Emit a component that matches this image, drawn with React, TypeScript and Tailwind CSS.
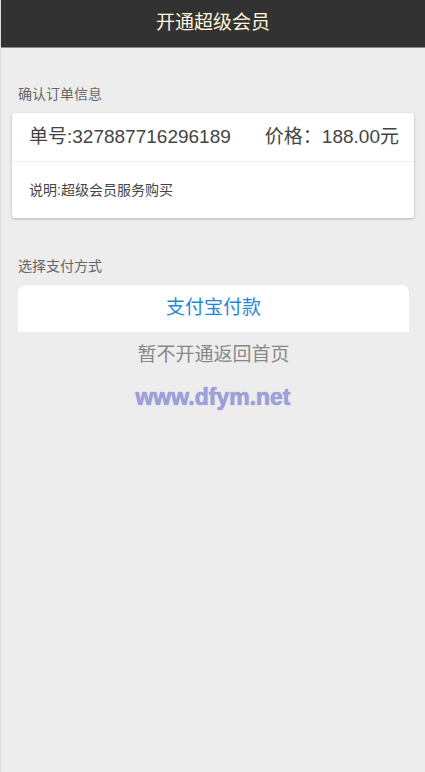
import React from 'react';

// ============================================================
// Pay page (开通超级会员)
// ============================================================

const font = 'font-["Liberation_Sans","Noto_Sans_CJK_SC",sans-serif]';

export default function App() {
  const order = {
    no: '327887716296189',
    price: '188.00',
    desc: '超级会员服务购买',
  };

  return (
    <div className={`min-h-[772px] w-[425px] border-l border-[#dcdcdc] bg-[#ededed] ${font}`}>
      {/* Header */}
      <header className="flex h-[48px] items-center justify-center border-b border-[#8a8a8a] bg-[#323232]">
        <h1 className="-mt-[3px] text-[19px] leading-none text-[#fff6dc]">开通超级会员</h1>
      </header>

      {/* Order info */}
      <div className="pl-[17px] pr-[11px] pt-[38px]">
        <p className="text-[14px] leading-[16px] text-[#666]">确认订单信息</p>
      </div>
      <div className="mx-[11px] mt-[11px] rounded-[3px] bg-white shadow-[0_1px_3px_rgba(0,0,0,0.25)]">
        <div className="flex h-[49px] items-center justify-between border-b border-[#f0f0f0] pl-[17px] pr-[15px] text-[19px] text-[#444]">
          <span>单号:{order.no}</span>
          <span>价格：{order.price}元</span>
        </div>
        <div className="flex h-[56px] items-center pl-[17px] text-[14px] text-[#444]">
          说明:{order.desc}
        </div>
      </div>

      {/* Pay method */}
      <div className="pl-[17px] pt-[40px]">
        <p className="text-[14px] leading-[16px] text-[#666]">选择支付方式</p>
      </div>
      <div className="mx-[17px] mt-[11px] w-[391px]">
        <button className="flex h-[47px] w-full items-center justify-center rounded-t-[8px] bg-white text-[19px] text-[#1f88d7]">
          支付宝付款
        </button>
        <button className="flex h-[47px] w-full items-center justify-center rounded-b-[8px] bg-[#ededed] text-[19px] text-[#888]">
          暂不开通返回首页
        </button>
      </div>

      {/* Watermark */}
      <div className="mt-[4px] text-center leading-[28px]">
        <span className='font-["Liberation_Sans",sans-serif] text-[23px] font-bold text-[#a0a0dc] [text-shadow:0_0_1px_#7070b8]'>
          www.dfym.net
        </span>
      </div>
    </div>
  );
}
